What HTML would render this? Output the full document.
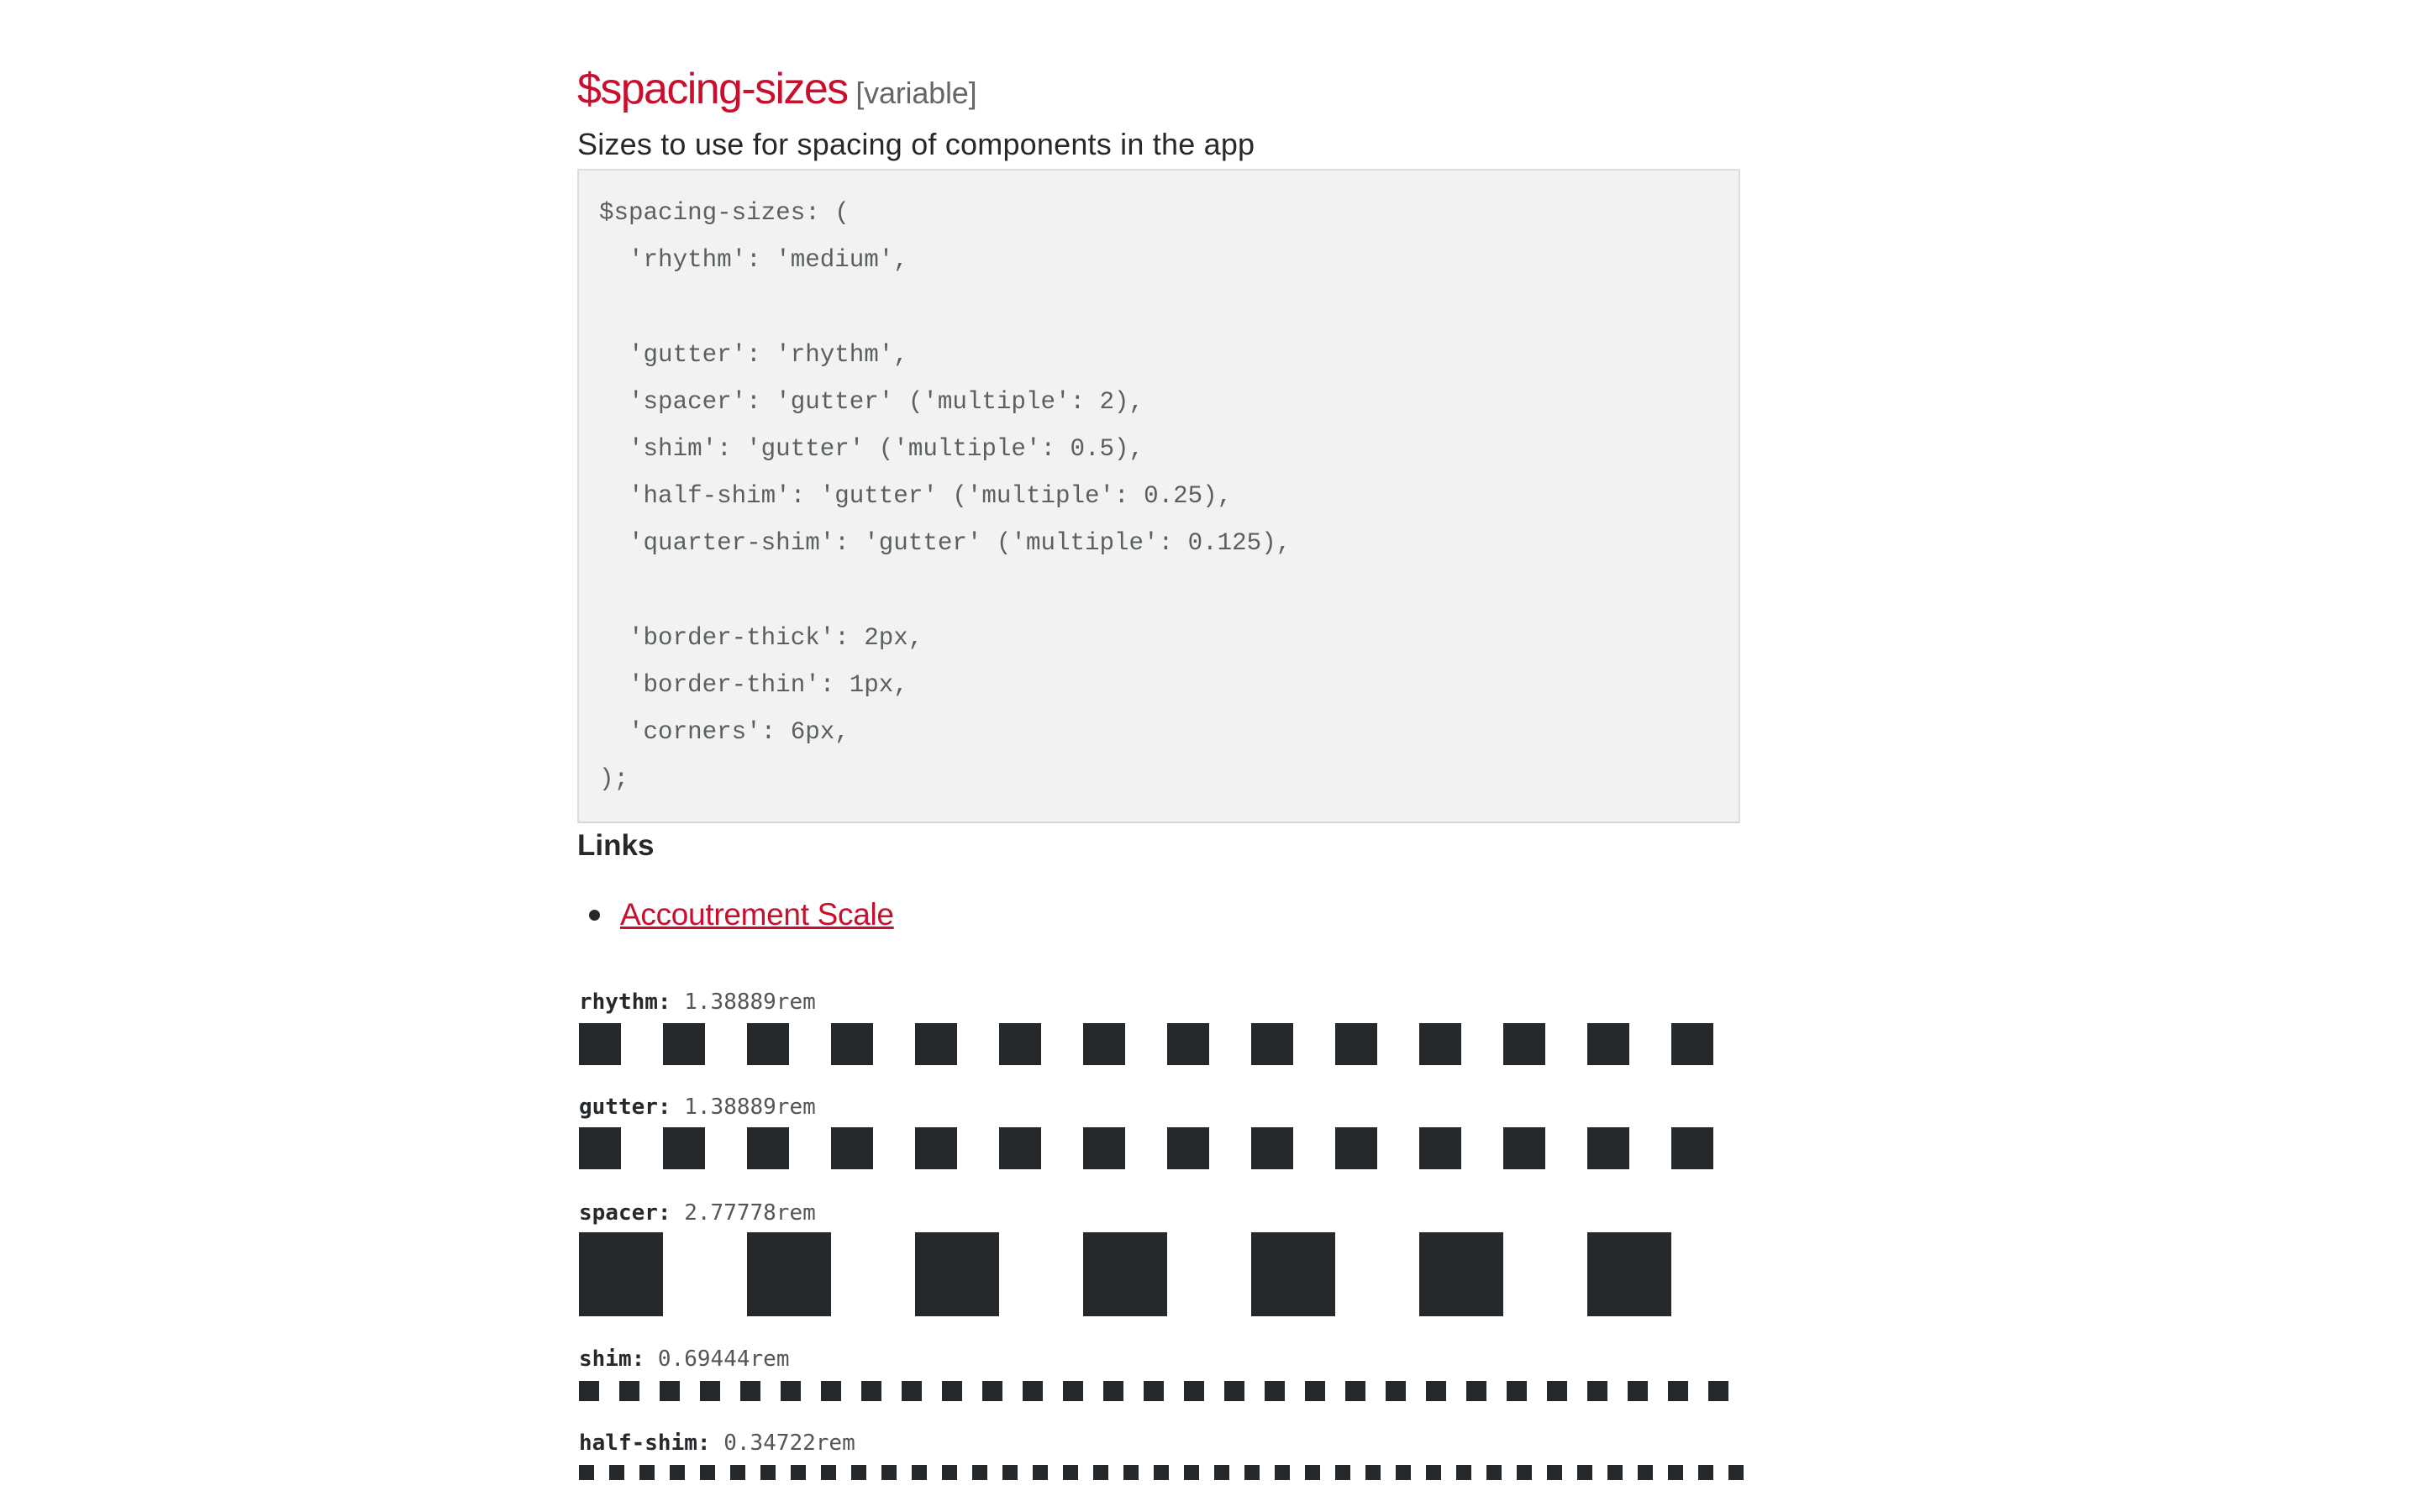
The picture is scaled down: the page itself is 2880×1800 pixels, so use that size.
<!DOCTYPE html>
<html><head><meta charset="utf-8"><style>
html,body{margin:0;padding:0;background:#fff;width:2880px;height:1800px;overflow:hidden;position:relative}
.a{position:absolute;white-space:pre}
.t{font-family:"Liberation Sans",sans-serif}
.c{font-family:"Liberation Mono",monospace;font-size:29.2px;color:#5a5f61;line-height:56.2px}
.row{position:absolute;left:689px;display:flex}
.row div{background:#26292c;flex:none}
.lab{position:absolute;left:689px;font-family:"DejaVu Sans Mono",monospace;font-size:26px;line-height:30px;color:#555}
.lab b{color:#26292c}
</style></head><body>
<div class="a t" style="left:687px;top:74px;font-size:52px;line-height:64px;color:#c8102e;letter-spacing:-1.6px">$spacing-sizes<span style="color:#666;font-size:36px;letter-spacing:-0.2px"> [variable]</span></div>
<div class="a t" style="left:687px;top:150px;font-size:36px;line-height:44px;color:#26292c;letter-spacing:0.2px">Sizes to use for spacing of components in the app</div>
<div style="position:absolute;left:687px;top:201px;width:1380px;height:775px;background:#f2f2f2;border:2px solid #ddd;border-bottom-color:#d5d5d5"></div>
<div class="a c" style="left:713px;top:226px">$spacing-sizes: (
  'rhythm': 'medium',

  'gutter': 'rhythm',
  'spacer': 'gutter' ('multiple': 2),
  'shim': 'gutter' ('multiple': 0.5),
  'half-shim': 'gutter' ('multiple': 0.25),
  'quarter-shim': 'gutter' ('multiple': 0.125),

  'border-thick': 2px,
  'border-thin': 1px,
  'corners': 6px,
);</div>
<div class="a t" style="left:687px;top:985px;font-size:35px;line-height:44px;font-weight:bold;color:#26292c">Links</div>
<div style="position:absolute;left:701px;top:1083px;width:13px;height:13px;border-radius:50%;background:#26292c"></div>
<div class="a t" style="left:738px;top:1067px;font-size:37px;line-height:44px;color:#c8102e;text-decoration:underline;letter-spacing:-0.3px">Accoutrement Scale</div>

<div class="lab" style="top:1178px"><b>rhythm:</b> 1.38889rem</div>
<div class="row" style="top:1218px;gap:50px"><div style="width:50px;height:50px"></div><div style="width:50px;height:50px"></div><div style="width:50px;height:50px"></div><div style="width:50px;height:50px"></div><div style="width:50px;height:50px"></div><div style="width:50px;height:50px"></div><div style="width:50px;height:50px"></div><div style="width:50px;height:50px"></div><div style="width:50px;height:50px"></div><div style="width:50px;height:50px"></div><div style="width:50px;height:50px"></div><div style="width:50px;height:50px"></div><div style="width:50px;height:50px"></div><div style="width:50px;height:50px"></div></div>

<div class="lab" style="top:1303px"><b>gutter:</b> 1.38889rem</div>
<div class="row" style="top:1342px;gap:50px"><div style="width:50px;height:50px"></div><div style="width:50px;height:50px"></div><div style="width:50px;height:50px"></div><div style="width:50px;height:50px"></div><div style="width:50px;height:50px"></div><div style="width:50px;height:50px"></div><div style="width:50px;height:50px"></div><div style="width:50px;height:50px"></div><div style="width:50px;height:50px"></div><div style="width:50px;height:50px"></div><div style="width:50px;height:50px"></div><div style="width:50px;height:50px"></div><div style="width:50px;height:50px"></div><div style="width:50px;height:50px"></div></div>

<div class="lab" style="top:1429px"><b>spacer:</b> 2.77778rem</div>
<div class="row" style="top:1467px;gap:100px"><div style="width:100px;height:100px"></div><div style="width:100px;height:100px"></div><div style="width:100px;height:100px"></div><div style="width:100px;height:100px"></div><div style="width:100px;height:100px"></div><div style="width:100px;height:100px"></div><div style="width:100px;height:100px"></div></div>

<div class="lab" style="top:1603px"><b>shim:</b> 0.69444rem</div>
<div class="row" id="shim" style="top:1644px;gap:24px"></div>

<div class="lab" style="top:1703px"><b>half-shim:</b> 0.34722rem</div>
<div class="row" id="half" style="top:1744px;gap:18px"></div>
<script>
var s=document.getElementById('shim');for(var i=0;i<29;i++){var d=document.createElement('div');d.style.width='24px';d.style.height='24px';s.appendChild(d);}
var h=document.getElementById('half');for(var i=0;i<39;i++){var d=document.createElement('div');d.style.width='18px';d.style.height='18px';h.appendChild(d);}
</script>
</body></html>
